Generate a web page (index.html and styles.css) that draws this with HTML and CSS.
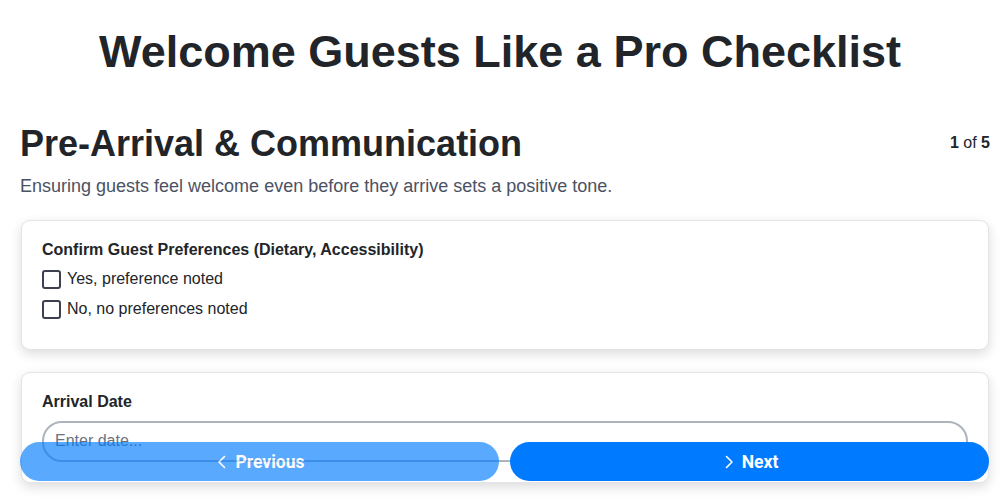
FILE: index.html
```html
<!DOCTYPE html>
<html lang="en">
<head>
<meta charset="utf-8">
<title>Welcome Guests Like a Pro Checklist</title>
<link rel="stylesheet" href="styles.css">
</head>
<body>
<h1 class="title">Welcome Guests Like a Pro Checklist</h1>
<main class="page">
  <div class="section-head">
    <h2 class="section-title">Pre-Arrival &amp; Communication</h2>
    <div class="progress"><b>1</b> of <b>5</b></div>
  </div>
  <p class="section-desc">Ensuring guests feel welcome even before they arrive sets a positive tone.</p>

  <div class="card">
    <div class="field-label">Confirm Guest Preferences (Dietary, Accessibility)</div>
    <label class="option"><input type="checkbox" class="check"><span>Yes, preference noted</span></label>
    <label class="option"><input type="checkbox" class="check"><span>No, no preferences noted</span></label>
  </div>

  <div class="card card-date">
    <div class="field-label label-date">Arrival Date</div>
    <input type="text" class="text-input" placeholder="Enter date...">
  </div>
</main>

<nav class="nav-bar">
  <button class="btn btn-prev" type="button">
    <svg class="chev" viewBox="0 0 16 16" width="16" height="16"><path d="M10.5 2.5 L5 8 L10.5 13.5" fill="none" stroke="#fff" stroke-width="1.6" stroke-linecap="round" stroke-linejoin="round"/></svg>
    <span>Previous</span>
  </button>
  <button class="btn btn-next" type="button">
    <svg class="chev" viewBox="0 0 16 16" width="16" height="16"><path d="M5.5 2.5 L11 8 L5.5 13.5" fill="none" stroke="#fff" stroke-width="1.6" stroke-linecap="round" stroke-linejoin="round"/></svg>
    <span>Next</span>
  </button>
</nav>
</body>
</html>
```

FILE: styles.css
```css
html, body {
  margin: 0;
  padding: 0;
  background: #ffffff;
}

body {
  font-family: "Liberation Sans", Arial, sans-serif;
  color: #212529;
  overflow: hidden;
  height: 500px;
}

.title {
  margin: 26px 0 0;
  text-align: center;
  font-size: 45px;
  font-weight: 700;
  line-height: 1.15;
  color: #212529;
}

.page {
  padding: 0 10px 0 20px;
}

.section-head {
  display: flex;
  align-items: center;
  justify-content: space-between;
  margin-top: 45px;
}

.section-title {
  margin: 0;
  font-size: 36px;
  font-weight: 700;
  line-height: 1.15;
  color: #212529;
}

.progress {
  font-size: 16px;
  color: #212529;
}

.section-desc {
  margin: 12px 0 23px;
  font-size: 18px;
  line-height: 1.15;
  color: #4b5263;
}

.card {
  background: #ffffff;
  border: 1px solid #e3e4ea;
  border-radius: 9px;
  margin: 0 1px 22px;
  padding: 20px 20px 20px;
  box-shadow: 0 4px 12px rgba(0, 0, 0, 0.14);
}

.field-label {
  font-size: 16px;
  font-weight: 700;
  line-height: 1.15;
  color: #212529;
  margin-bottom: 10px;
}

.label-date {
  margin-bottom: 9px;
}

.option {
  display: flex;
  align-items: center;
  gap: 6px;
  height: 20px;
  margin-bottom: 10px;
  font-size: 16px;
  color: #212529;
}

.check {
  -webkit-appearance: none;
  appearance: none;
  margin: 0;
  width: 19px;
  height: 19px;
  border: 2px solid #3c4050;
  border-radius: 3px;
  background: #fff;
  box-sizing: border-box;
}

.text-input {
  display: block;
  box-sizing: border-box;
  width: 100%;
  height: 41px;
  border: 2px solid #adb4bd;
  border-radius: 20px;
  padding: 0 11px;
  font-family: "Liberation Sans", Arial, sans-serif;
  font-size: 16px;
  color: #212529;
  background: #fff;
}

.text-input::placeholder {
  color: #6c727d;
}

.nav-bar {
  position: fixed;
  left: 20px;
  right: 11px;
  bottom: 19px;
  display: flex;
  gap: 11px;
}

.btn {
  flex: 1;
  height: 39px;
  border: none;
  border-radius: 20px;
  display: flex;
  align-items: center;
  justify-content: center;
  gap: 5px;
  font-family: Roboto, "Liberation Sans", sans-serif;
  font-size: 17.5px;
  font-weight: 700;
  color: #ffffff;
  background: #007bff;
}

.btn-prev {
  opacity: 0.65;
}

.chev {
  display: block;
}
```
